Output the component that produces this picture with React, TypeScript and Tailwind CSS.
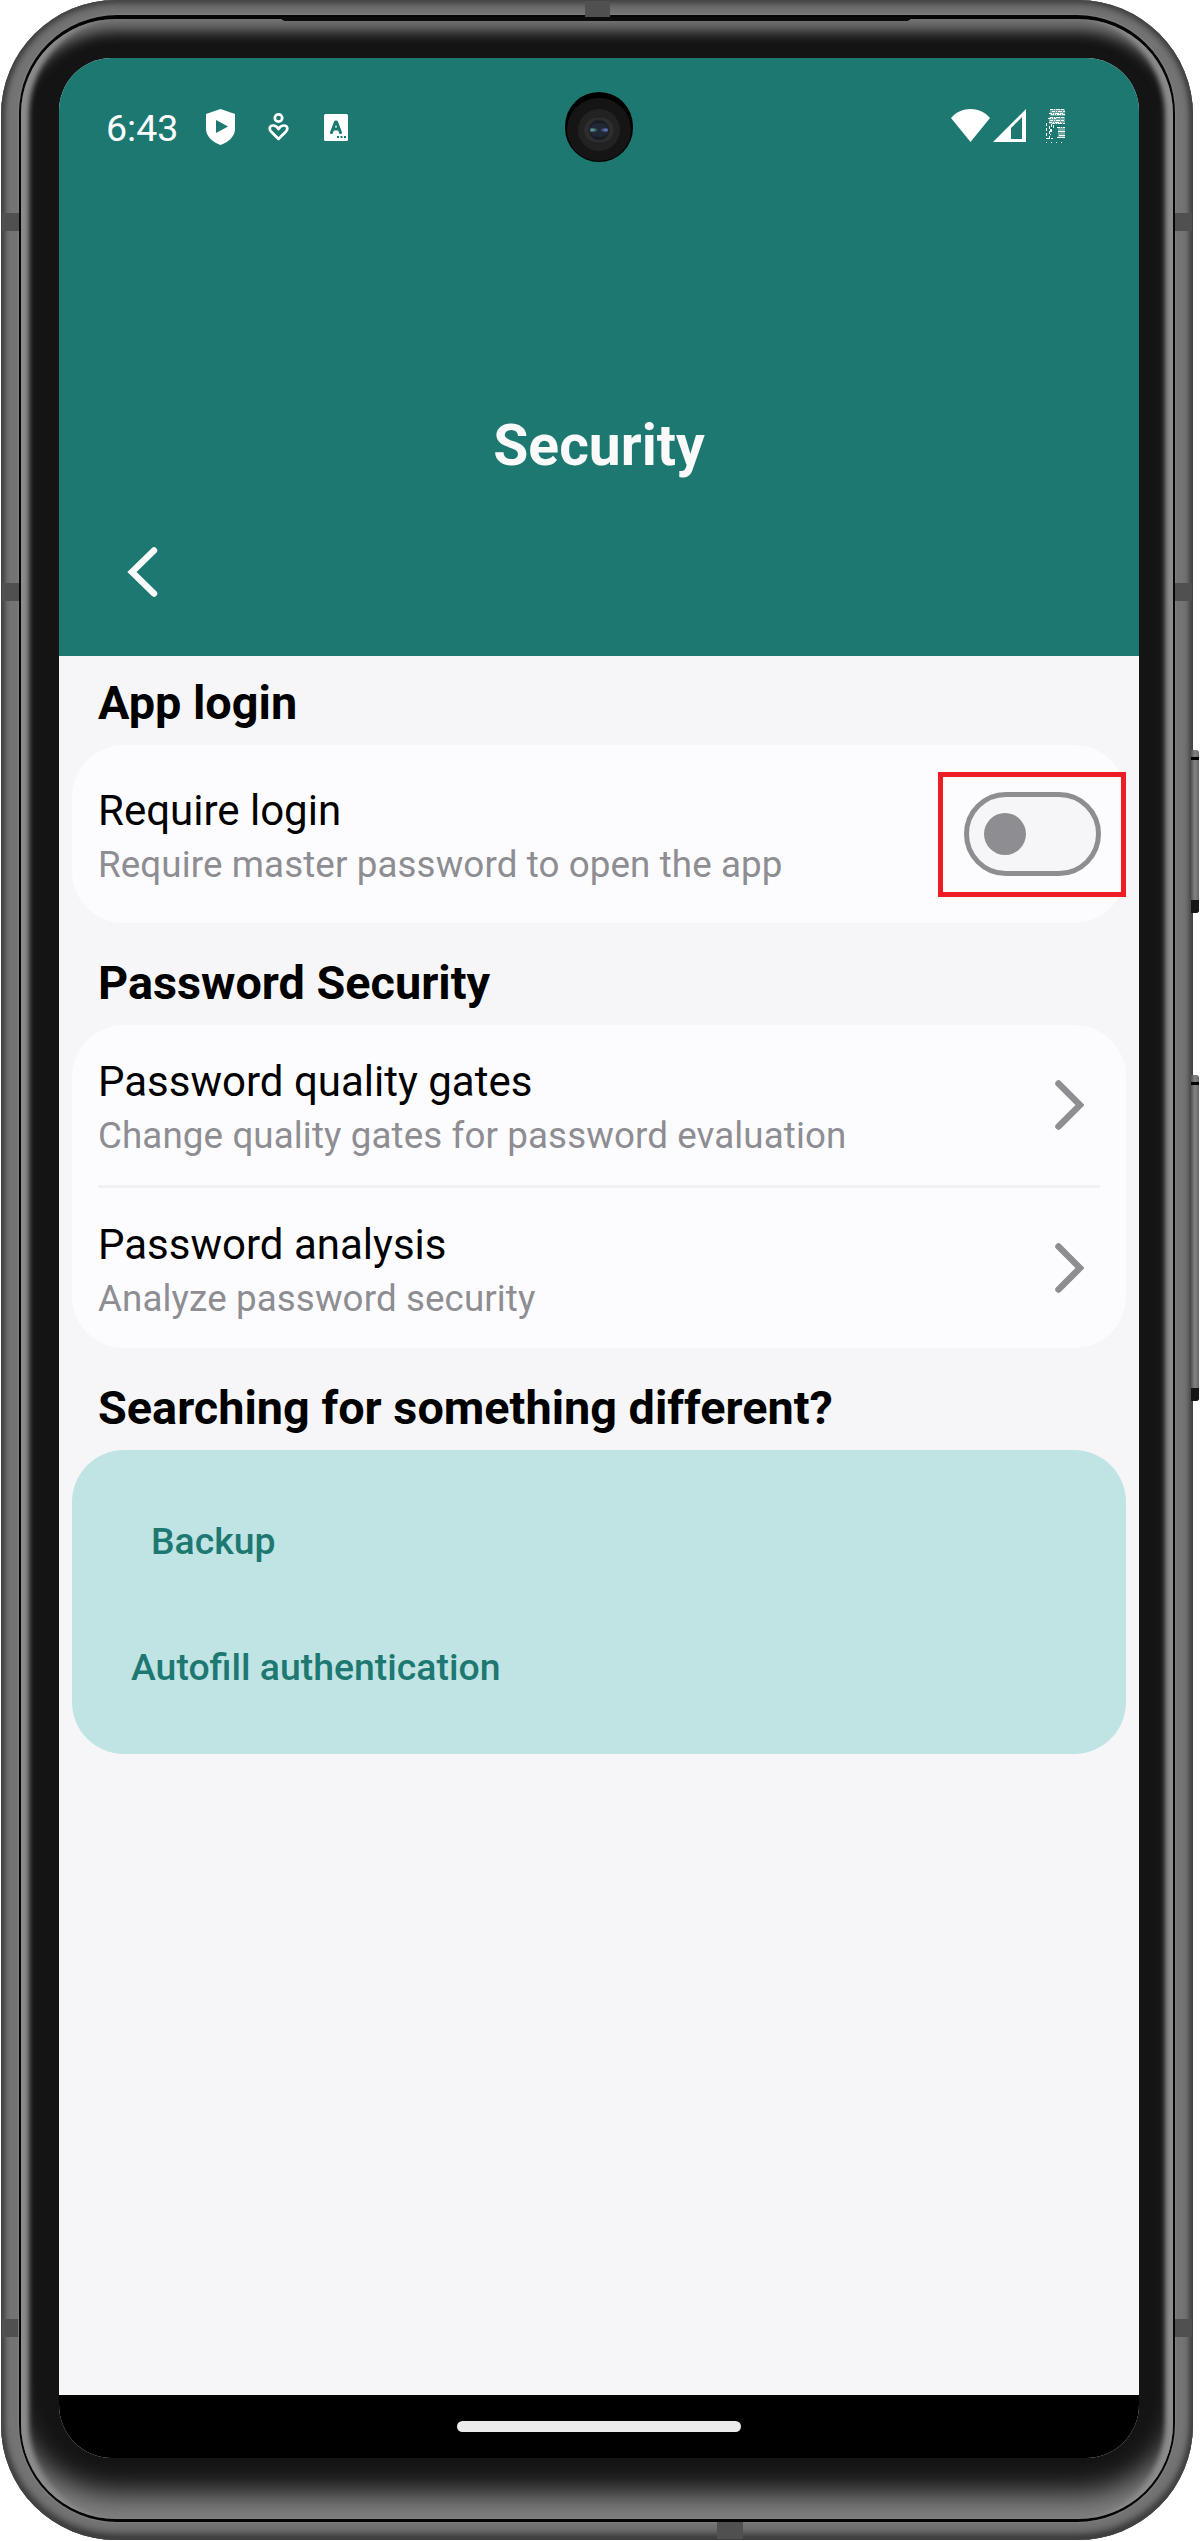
import React from "react";

const font = "font-['Roboto',sans-serif]";

function StatusBar() {
  return (
    <div className="flex h-[140px] items-start justify-between pl-[47px] pr-[74px]">
      <div className="flex h-[140px] items-center text-white">
        <span className="w-[99px] pt-[2px] text-[37.500px] leading-none">6:43</span>
        <svg className="-mt-[2px] ml-px h-[36px] w-[30px]" viewBox="0 0 30 36">
          <path fill="#fff" d="M14.500 0 29 5v15c0 7-6 13-14.500 16C6 33 0 27 0 20V5Z" />
          <path fill="#1e7872" d="M10 11v13l12-6.500Z" />
        </svg>
        <svg className="-mt-[2px] ml-[32px] h-[28px] w-[21px]" viewBox="0 0 21 28" fill="none" stroke="#fff" strokeWidth="2.700">
          <circle cx="10.500" cy="5" r="3.700" />
          <path strokeLinejoin="round" d="M10.500 26 3 18.500C.5 15.500 2 12.500 5 12.500c2.500 0 4 1 5.500 3.500 1.500-2.500 3-3.500 5.500-3.500 3 0 4.500 3 2 6Z" />
        </svg>
        <svg className="-mt-[2px] ml-[35px] h-[27px] w-[24px]" viewBox="0 0 24 27">
          <rect width="24" height="27" rx="1.500" fill="#fff" />
          <path fill="none" stroke="#1e7872" strokeWidth="3" strokeLinecap="round" strokeLinejoin="round" d="M7.500 18.500 11.500 8h1l4 10.500M9 15h6" />
          <path fill="#1e7872" d="M13 22h2v2h-2zM16.500 22h2v2h-2zM20 22h2v2h-2z" />
        </svg>
      </div>
      <div className="flex pt-[51px]">
        <svg className="h-[33px] w-[39px]" viewBox="0 0 39 33">
          <path fill="#fff" d="M0 9C10-3 29-3 39 9L19.500 33Z" />
        </svg>
        <svg className="ml-[3px] h-[33px] w-[33px]" viewBox="0 0 33 33">
          <path fill="#fff" fillRule="evenodd" d="M0 33 33 0v33ZM18 19v11h11V8Z" />
        </svg>
        <svg className="ml-[19px] h-[34px] w-[20px]" viewBox="0 0 20 34" shapeRendering="crispEdges">
          <path fill="#fff" fillOpacity="0.350" d="M5 0h15v7H5zM4 8h16v7H4zM13 18h7v11h-7z" />
          <path stroke="#fff" fill="none" strokeWidth="1" strokeDasharray="3 1 1 1 4 1" d="M5 .5h15M7 2.500h13M4 4.500h14M6 5.500h14M5 8.500h14M3 9.500h8M5 11.500h15M4 13.500h12M7 14.500h13M12 18.500h8" />
          <path stroke="#fff" fill="none" d="M13 22.500h7M14 26.500h6M12 28.500h8" />
          <path stroke="#fff" fill="none" strokeWidth="1" strokeDasharray="3 2" d="M1.500 14v15M4.500 17v14M6.500 15v9M5.500 20v6M8.500 16v4M1 29.500h7" />
          <path stroke="#fff" fill="none" strokeWidth="1" strokeDasharray="1 4" d="M1 33.500h19" />
        </svg>
      </div>
    </div>
  );
}

function Camera() {
  return (
    <div className="absolute left-[506px] top-[34px] h-[70px] w-[68px] rounded-full bg-black p-[2px] pt-[6px]">
      <div className="flex h-[63px] w-[64px] items-center justify-center rounded-full bg-[#151515]">
        <div className="flex h-[42px] w-[42px] items-center justify-center rounded-full bg-[#222]">
          <div className="flex h-[24px] w-[30px] items-center justify-center rounded-full bg-[radial-gradient(circle,#171a20_45%,#303030_60%,#222_100%)]">
            <div className="h-[14px] w-[18px] rounded-full bg-[radial-gradient(ellipse_at_12%_50%,#66b5b0_0%,transparent_26%),radial-gradient(ellipse_at_88%_50%,#6484d8_0%,transparent_26%),linear-gradient(#202833,#202833)]" />
          </div>
        </div>
      </div>
    </div>
  );
}

function Heading({ children }: { children: React.ReactNode }) {
  return <h2 className="pl-[26px] text-[46.800px] font-bold leading-[56px]">{children}</h2>;
}

function Labels({ title, sub }: { title: string; sub: string }) {
  return (
    <div className="pt-[4px]">
      <div className="text-[42px] leading-[56px]">{title}</div>
      <div className="text-[36.750px] leading-[51px] tracking-[0.100px] text-[#8e8d92]">{sub}</div>
    </div>
  );
}

function Chevron() {
  return (
    <svg className="mr-[16px] h-[50px] w-[30px]" viewBox="0 0 30 50" fill="none" stroke="#8e8d92" strokeWidth="6.500" strokeLinecap="round">
      <path d="M4.500 3.500 26 25 4.500 46.500" />
    </svg>
  );
}

function Screen() {
  return (
    <div className={`relative flex h-[2400px] w-[1080px] flex-col overflow-hidden rounded-[53px] bg-[#f6f6f8] text-black ${font}`}>
      <header className="h-[598px] shrink-0 bg-[#1e7872] text-[#fafafa]">
        <StatusBar />
        <h1 className="mt-[213px] text-center text-[57px] font-bold leading-[70px]">Security</h1>
        <svg className="ml-[68px] mt-[65px] h-[52px] w-[32px]" viewBox="0 0 32 52" fill="none" stroke="#fafafa" strokeWidth="6.500" strokeLinecap="round">
          <path d="M27 4.500 5 26l22 21.500" />
        </svg>
      </header>
      <Camera />
      <main className="flex-1 px-[13px] pt-[19px]">
        <Heading>App login</Heading>
        <section className="mt-[14px] flex h-[178px] items-center justify-between rounded-[52px] bg-[#fcfcff] pl-[26px]">
          <Labels title="Require login" sub="Require master password to open the app" />
          <div className="flex h-[125px] w-[188px] items-center justify-center border-5 border-[#ee1c25]">
            <div className="flex h-[84px] w-[137px] items-center rounded-full border-[5.500px] border-[#8e8d92] bg-[#f6f6f8] pl-[15px]">
              <div className="size-[42px] rounded-full bg-[#8e8d92]" />
            </div>
          </div>
        </section>
        <div className="pt-[32px]"><Heading>Password Security</Heading></div>
        <section className="mt-[14px] flex h-[323px] flex-col rounded-[52px] bg-[#fcfcff] px-[26px]">
          <div className="flex h-[160px] items-center justify-between"><Labels title="Password quality gates" sub="Change quality gates for password evaluation" /><Chevron /></div>
          <div className="h-[3px] bg-[#f1f1f2]" />
          <div className="flex h-[160px] items-center justify-between"><Labels title="Password analysis" sub="Analyze password security" /><Chevron /></div>
        </section>
        <div className="pt-[32px]"><Heading>Searching for something different?</Heading></div>
        <section className="mt-[14px] flex h-[304px] flex-col gap-[76px] rounded-[52px] bg-[#c0e4e3] pl-[59px] pt-[66px] text-[37.400px] font-medium leading-[50px] text-[#1e7872]">
          <div className="pl-[20px]">Backup</div>
          <div>Autofill authentication</div>
        </section>
      </main>
      <footer className="flex h-[63px] shrink-0 items-center justify-center bg-black">
        <div className="h-[11px] w-[284px] rounded-full bg-[#ebebeb]" />
      </footer>
    </div>
  );
}

function SideKey({ place }: { place: string }) {
  return (
    <div className={`absolute left-[1191px] flex w-[8px] flex-col overflow-hidden rounded-r-[3px] bg-[linear-gradient(90deg,#555,#858585_50%,#666)] ${place}`}>
      <div className="mt-[7px] h-[3px] bg-black" />
      <div className="flex-1" />
      <div className="h-[13px] bg-[#151515]" />
    </div>
  );
}

const bands = [
  "left-[2px] top-[213px] h-[18px] w-[17px]",
  "left-[2px] top-[583px] h-[18px] w-[17px]",
  "left-[2px] top-[2319px] h-[18px] w-[16px]",
  "left-[1175px] top-[213px] h-[18px] w-[17px]",
  "left-[1175px] top-[583px] h-[18px] w-[17px]",
  "left-[1175px] top-[2319px] h-[18px] w-[17px]",
  "left-[585px] top-[1px] h-[16px] w-[25px]",
  "left-[717px] top-[2522px] h-[17px] w-[26px]",
];

export default function App() {
  return (
    <div className="relative h-[2541px] w-[1200px] overflow-hidden bg-white">
      <SideKey place="top-[750px] h-[163px]" />
      <SideKey place="top-[1075px] h-[326px]" />
      <div className="ml-px h-[2540px] w-[1192px] rounded-[115px] bg-[#747474] px-[18px] pb-[18px] pt-[15px] shadow-[inset_3px_0_4px_#444,inset_-3px_0_4px_#444,inset_0_4px_8px_#444,inset_0_-6px_9px_#333]">
        <div className="h-[2507px] w-[1156px] rounded-[98px] bg-[#050505] px-[2px] pb-[3px] pt-[4px] shadow-[0_0_2px_#999]">
          <div className="h-[2500px] w-[1152px] rounded-[95px] bg-[#141414] pl-[38px] pt-[39px] shadow-[inset_11px_0_5px_-3px_#8c8c8c,inset_-11px_0_5px_-3px_#8c8c8c,inset_0_19px_14px_-7px_#757575,inset_0_-38px_28px_-12px_#808080]">
            <Screen />
          </div>
        </div>
      </div>
      <div className="absolute left-[278px] top-[17px] h-[4px] w-[636px] bg-[#0c0c0c] [clip-path:polygon(0_0,100%_0,99%_100%,1%_100%)]" />
      {bands.map((b) => (
        <div key={b} className={`absolute bg-[#505050] ${b}`} />
      ))}
    </div>
  );
}
